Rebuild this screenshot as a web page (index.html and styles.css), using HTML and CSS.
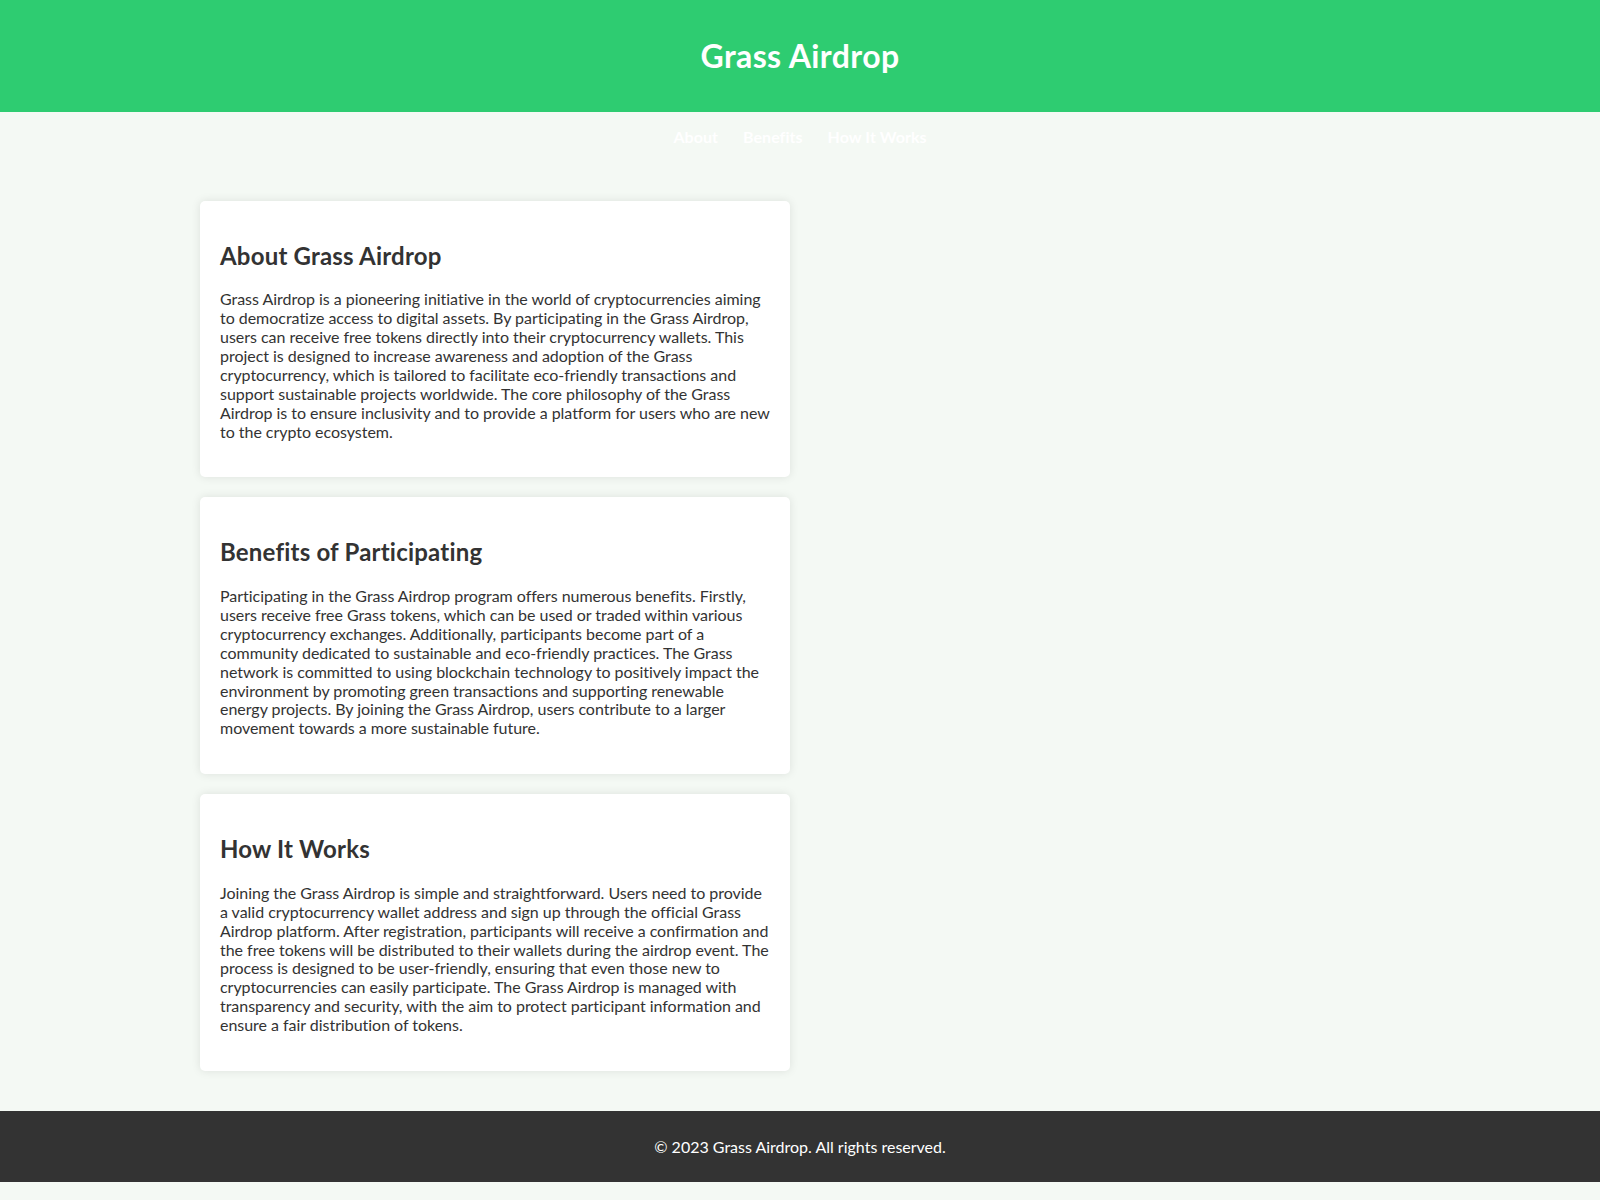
FILE: index.html
```html
<!DOCTYPE html>
<html lang="en">
<head>
<meta charset="utf-8">
<title>Grass Airdrop</title>
<link rel="stylesheet" href="styles.css">
</head>
<body>
<header class="site-header">
  <h1 class="site-title">Grass Airdrop</h1>
</header>
<nav class="site-nav">
  <a href="#about">About</a>
  <a href="#benefits">Benefits</a>
  <a href="#how">How It Works</a>
</nav>
<main class="container">
  <section class="card" id="about">
    <h2>About Grass Airdrop</h2>
    <p>Grass Airdrop is a pioneering initiative in the world of cryptocurrencies aiming to democratize access to digital assets. By participating in the Grass Airdrop, users can receive free tokens directly into their cryptocurrency wallets. This project is designed to increase awareness and adoption of the Grass cryptocurrency, which is tailored to facilitate eco-friendly transactions and support sustainable projects worldwide. The core philosophy of the Grass Airdrop is to ensure inclusivity and to provide a platform for users who are new to the crypto ecosystem.</p>
  </section>
  <section class="card" id="benefits">
    <h2>Benefits of Participating</h2>
    <p>Participating in the Grass Airdrop program offers numerous benefits. Firstly, users receive free Grass tokens, which can be used or traded within various cryptocurrency exchanges. Additionally, participants become part of a community dedicated to sustainable and eco-friendly practices. The Grass network is committed to using blockchain technology to positively impact the environment by promoting green transactions and supporting renewable energy projects. By joining the Grass Airdrop, users contribute to a larger movement towards a more sustainable future.</p>
  </section>
  <section class="card" id="how">
    <h2>How It Works</h2>
    <p>Joining the Grass Airdrop is simple and straightforward. Users need to provide a valid cryptocurrency wallet address and sign up through the official Grass Airdrop platform. After registration, participants will receive a confirmation and the free tokens will be distributed to their wallets during the airdrop event. The process is designed to be user-friendly, ensuring that even those new to cryptocurrencies can easily participate. The Grass Airdrop is managed with transparency and security, with the aim to protect participant information and ensure a fair distribution of tokens.</p>
  </section>
</main>
<footer class="site-footer">
  <p>&copy; 2023 Grass Airdrop. All rights reserved.</p>
</footer>
</body>
</html>
```
FILE: styles.css
```css
* { box-sizing: border-box; }
body {
  margin: 0;
  font-family: Lato, "Open Sans", sans-serif;
  font-size: 16px;
  line-height: 1.2;
  color: #333;
  background: #f4f9f4;
}
.site-header {
  background: #2ecc71;
  color: #fff;
  text-align: center;
  padding: 16px 0;
}
.site-title {
  margin: 21px 0;
  font-size: 32px;
  font-weight: 700;
  letter-spacing: 0.4px;
}
.site-nav {
  display: flex;
  justify-content: center;
  gap: 25px;
  padding: 15px 0;
}
.site-nav a {
  color: #fff;
  text-decoration: none;
  font-weight: 700;
  letter-spacing: 0.05px;
}
.container {
  width: 1200px;
  margin: 39px auto 40px;
  display: grid;
  grid-template-columns: 590px;
  gap: 20px;
}
.card {
  background: #fff;
  border-radius: 5px;
  padding: 20px;
  box-shadow: 0 0 10px rgba(0, 0, 0, 0.1);
}
.card h2 {
  font-size: 24px;
  font-weight: 700;
  letter-spacing: 0.2px;
  margin: 21px 0 20px;
}
.card p {
  margin: 16px 0;
  line-height: 18.88px;
  letter-spacing: -0.03px;
}
.site-footer {
  background: #333;
  color: #fff;
  text-align: center;
  padding: 10px 0;
}
.site-footer p { margin: 16px 0; }
```
